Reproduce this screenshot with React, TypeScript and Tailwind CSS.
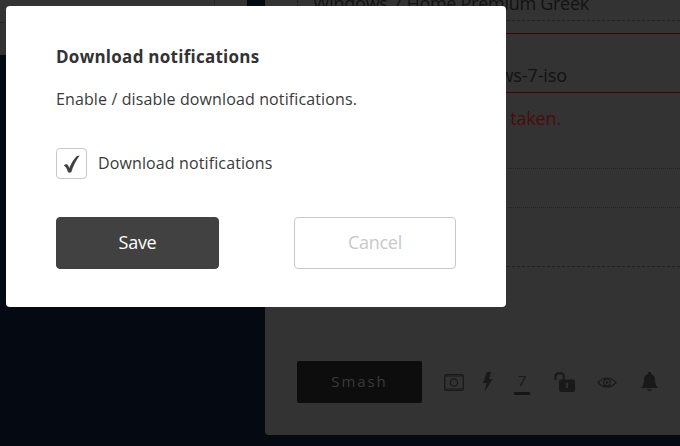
import type { ReactNode } from 'react';

interface ModalButtonProps {
  children: ReactNode;
  variant?: 'solid' | 'outline';
}

function ModalButton({ children, variant = 'solid' }: ModalButtonProps) {
  const colors =
    variant === 'solid'
      ? 'w-[163px] border-[#414141] bg-[#414141] text-white'
      : 'w-[162px] border-[#c8c8c8] bg-white text-[#c8c8c8]';

  return (
    <button
      type="button"
      className={`flex h-[52px] items-center justify-center rounded border pb-px text-[18px] tracking-[-0.3px] ${colors}`}
    >
      {children}
    </button>
  );
}

function NotificationsModal() {
  return (
    <div
      role="dialog"
      className="absolute left-[6px] top-[6px] h-[301px] w-[500px] rounded bg-white px-[50px] pt-[39px] text-[#3a3a3a]"
    >
      <h2 className="text-[17px] leading-6 font-bold tracking-[0.26px] whitespace-nowrap text-[#333]">
        Download notifications
      </h2>
      <p className="mt-[18px] text-base leading-6 tracking-[0.12px] whitespace-nowrap">
        Enable / disable download notifications.
      </p>

      <label className="mt-[37px] flex h-[31px] items-center gap-[11px]">
        <span className="flex h-[31px] w-[31px] items-center justify-center rounded border border-[#c8c8c8]">
          <svg width="17" height="18" viewBox="0 0 17 18" fill="#414141">
            <path d="M.8 10.6 Q2.3 8.8 4 9.2 Q5.2 10 6.3 13 Q9.5 5 14 1 L16.7 .5 Q11 8 8.4 17 Q5.8 18.5 4.8 16.7 Q3.5 12 .8 10.6Z" />
          </svg>
        </span>
        <span className="pb-[2px] text-base tracking-[0.12px] whitespace-nowrap">Download notifications</span>
      </label>

      <div className="mt-[38px] flex justify-between">
        <ModalButton>Save</ModalButton>
        <ModalButton variant="outline">Cancel</ModalButton>
      </div>
    </div>
  );
}

function Toolbar() {
  return (
    <div className="flex h-[42px] items-center text-[#191919]">
      <button
        type="button"
        className="h-[42px] w-[125px] rounded-xs bg-[#0d0d0d] pb-[2px] text-[15px] tracking-[1.9px] text-[#3a3a3a]"
      >
        Smash
      </button>
      <svg className="ml-[22px]" width="20" height="17" viewBox="0 0 20 17" fill="none" stroke="currentColor">
        <rect x=".75" y=".75" width="18.5" height="15.5" rx="1.5" strokeWidth="1.3" />
        <path d="M2.5 2.5h15M2.5 14.5h15" strokeDasharray="1 1" />
        <circle cx="10" cy="8.5" r="3.6" strokeWidth="1.3" />
      </svg>
      <svg className="ml-[19px]" width="10" height="20" viewBox="0 0 10 20" fill="currentColor">
        <path d="M4 0H8L6 7H9.5L1.5 20L3.7 11H0Z" />
      </svg>
      <span className="mt-[3px] ml-[21px] flex w-4 flex-col items-center text-[15px] leading-[17px]">
        7
        <span className="mt-[3px] h-[3px] w-4 bg-[#161616]" />
      </span>
      <svg className="ml-6" width="21" height="20" viewBox="0 0 21 20" fill="none" stroke="currentColor">
        <path d="M1.5 8V4.5Q1.5 1.2 5 1.2H7Q9.8 1.2 9.8 4.5V8" strokeWidth="2" />
        <rect x="5" y="7.5" width="16" height="12.5" rx="2" fill="currentColor" stroke="none" />
        <path d="M13 11V16" stroke="#303030" strokeWidth="2" />
        <circle cx="13" cy="12" r="1.5" fill="#303030" stroke="none" />
      </svg>
      <svg className="ml-[22px]" width="20" height="11" viewBox="0 0 20 11" fill="none" stroke="currentColor">
        <path d="M1 5.5Q5 1 10 1T19 5.5Q15 10 10 10T1 5.5Z" strokeWidth="1.2" />
        <circle cx="10" cy="5.5" r="3.3" strokeWidth="1.2" />
        <circle cx="10" cy="5.5" r="1.2" fill="currentColor" stroke="none" />
      </svg>
      <svg className="ml-6" width="17" height="20" viewBox="0 0 17 20" fill="currentColor">
        <path d="M7 2V0H10V2Q14 3 14 8Q14 13 17 16H0Q3 13 3 8Q3 3 7 2ZM6 17.3H11Q10.5 19 8.5 19T6 17.3Z" />
      </svg>
    </div>
  );
}

export default function App() {
  return (
    <div className="relative flex h-[446px] w-[680px] items-start gap-[18px] overflow-hidden bg-[#050912] font-['Open_Sans',sans-serif]">
      {/* Side panel */}
      <div className="h-[55px] w-[247px] shrink-0 bg-[#333]">
        <div className="h-[23px] w-[215px] border-r border-b border-dotted border-[#202020]" />
      </div>

      {/* Edit form */}
      <div className="h-[435px] w-[415px] shrink-0 rounded-bl-sm bg-[#333] pl-8 text-[18px] whitespace-nowrap text-[#121212]">
        <div className="flex h-[21px] items-end border-b border-l border-dashed border-[#222] pb-[5px] pl-[15px] leading-6 tracking-[-0.28px]">
          Windows 7 Home Premium Greek
        </div>
        <div className="mt-3 h-[60px] border-y border-l border-[#350808] pt-[29px] leading-6">
          <div className="w-[269px] text-right tracking-[-0.1px]">windows-7-iso</div>
        </div>
        <div className="mt-[13px] w-[264px] text-right leading-6 tracking-[-0.15px] text-[#4a0b0b]">
          This name is already taken.
        </div>
        <div className="mt-[38px] h-[40px] border-y border-dotted border-[#202020]" />
        <div className="mb-[94px] h-[59px] border-b border-dashed border-[#202020]" />
        <Toolbar />
      </div>

      <NotificationsModal />
    </div>
  );
}
